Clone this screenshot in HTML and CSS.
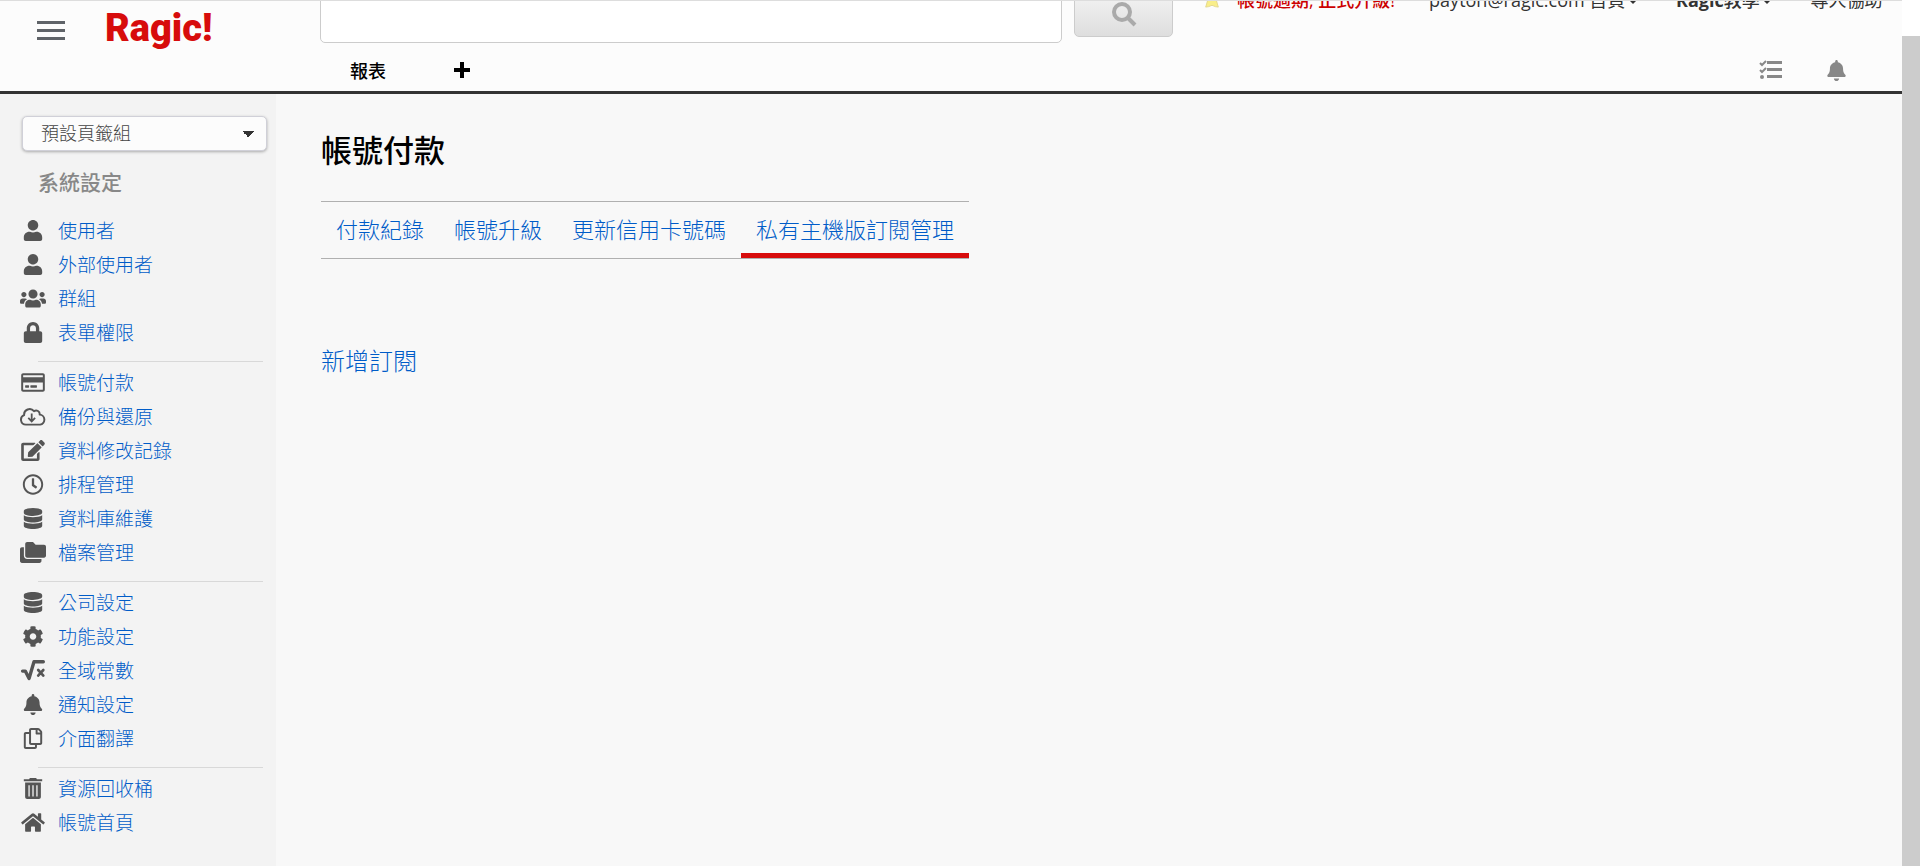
FILE: index.html
```html
<!DOCTYPE html>
<html lang="zh-Hant">
<head>
    <meta charset="UTF-8">
    <meta name="viewport" content="width=device-width, initial-scale=1.0">
    <title>帳號付款</title>
    <link rel="stylesheet" href="styles.css">
</head>
<body>
    <svg class="sprite" aria-hidden="true">
        <symbol id="i-user" viewBox="0 0 448 512"><path d="M224 256c70.700 0 128-57.300 128-128S294.700 0 224 0 96 57.300 96 128s57.300 128 128 128zm89.600 32h-16.700c-22.200 10.200-46.900 16-72.900 16s-50.600-5.800-72.900-16h-16.700C60.200 288 0 348.200 0 422.400V464c0 26.500 21.500 48 48 48h352c26.500 0 48-21.500 48-48v-41.600c0-74.200-60.200-134.400-134.400-134.400z"/></symbol>
        <symbol id="i-users" viewBox="0 0 640 512"><path d="M96 224c35.300 0 64-28.700 64-64s-28.700-64-64-64-64 28.700-64 64 28.700 64 64 64zm448 0c35.300 0 64-28.700 64-64s-28.700-64-64-64-64 28.700-64 64 28.700 64 64 64zm32 32h-64c-17.600 0-33.500 7.100-45.100 18.600 40.300 22.100 68.900 62 75.100 109.400h66c17.700 0 32-14.300 32-32v-32c0-35.300-28.700-64-64-64zm-256 0c61.900 0 112-50.100 112-112S381.900 32 320 32 208 82.100 208 144s50.100 112 112 112zm76.800 32h-8.300c-20.800 10-43.900 16-68.500 16s-47.600-6-68.500-16h-8.300C179.600 288 128 339.600 128 403.200V432c0 26.500 21.500 48 48 48h288c26.500 0 48-21.500 48-48v-28.800c0-63.600-51.600-115.200-115.200-115.200zm-223.700-13.400C161.500 263.100 145.600 256 128 256H64c-35.300 0-64 28.700-64 64v32c0 17.700 14.300 32 32 32h65.900c6.300-47.400 34.900-87.300 75.200-109.400z"/></symbol>
        <symbol id="i-lock" viewBox="0 0 448 512"><path d="M400 224h-24v-72C376 68.200 307.800 0 224 0S72 68.200 72 152v72H48c-26.500 0-48 21.500-48 48v192c0 26.500 21.500 48 48 48h352c26.500 0 48-21.500 48-48V272c0-26.500-21.500-48-48-48zm-104 0H152v-72c0-39.700 32.300-72 72-72s72 32.300 72 72v72z"/></symbol>
        <symbol id="i-card" viewBox="0 0 576 512"><path d="M527.900 32H48.100C21.500 32 0 53.500 0 80v352c0 26.500 21.500 48 48.100 48h479.800c26.600 0 48.100-21.500 48.100-48V80c0-26.500-21.500-48-48.100-48zM54.100 80h467.800c3.300 0 6 2.700 6 6v42H48.100V86c0-3.300 2.700-6 6-6zm467.800 352H54.100c-3.300 0-6-2.700-6-6V256h479.800v170c0 3.300-2.700 6-6 6zM192 332v40c0 6.600-5.400 12-12 12h-72c-6.600 0-12-5.400-12-12v-40c0-6.600 5.400-12 12-12h72c6.600 0 12 5.400 12 12zm192 0v40c0 6.600-5.400 12-12 12H236c-6.600 0-12-5.400-12-12v-40c0-6.600 5.400-12 12-12h136c6.600 0 12 5.400 12 12z"/></symbol>
        <symbol id="i-cloud" viewBox="0 0 640 512"><path d="M144 456a120 120 0 0 1-42-232A136 136 0 0 1 344 126a88 88 0 0 1 140 84A124 124 0 0 1 496 456Z" fill="none" stroke="currentColor" stroke-width="48" stroke-linejoin="round"/><path d="M288 180v190M204 292l84 84 84-84" fill="none" stroke="currentColor" stroke-width="44"/></symbol>
        <symbol id="i-edit" viewBox="0 0 576 512"><path d="M402.600 83.200l90.200 90.200c3.800 3.800 3.800 10 0 13.800L274.400 405.600l-92.800 10.300c-12.400 1.400-22.900-9.100-21.500-21.500l10.300-92.800L388.800 83.200c3.800-3.800 10-3.800 13.800 0zm162-22.900l-48.800-48.800c-15.200-15.200-39.900-15.200-55.200 0l-35.400 35.400c-3.800 3.800-3.800 10 0 13.800l90.200 90.200c3.800 3.800 10 3.800 13.800 0l35.400-35.400c15.200-15.300 15.200-40 0-55.200zM384 346.200V448H64V128h229.800c3.200 0 6.200-1.300 8.500-3.500l40-40c7.600-7.600 2.200-20.500-8.500-20.500H48C21.500 64 0 85.500 0 112v352c0 26.500 21.500 48 48 48h352c26.500 0 48-21.500 48-48V306.200c0-10.700-12.900-16-20.500-8.500l-40 40c-2.200 2.300-3.500 5.300-3.500 8.500z"/></symbol>
        <symbol id="i-clock" viewBox="0 0 512 512"><path d="M256 8C119 8 8 119 8 256s111 248 248 248 248-111 248-248S393 8 256 8zm0 448c-110.500 0-200-89.500-200-200S145.500 56 256 56s200 89.500 200 200-89.500 200-200 200zm61.800-104.400l-84.900-61.700c-3.100-2.300-4.900-5.900-4.900-9.700V116c0-6.600 5.400-12 12-12h32c6.600 0 12 5.400 12 12v141.700l66.800 48.600c5.400 3.900 6.500 11.400 2.600 16.800L334.600 349c-3.900 5.300-11.400 6.500-16.800 2.600z"/></symbol>
        <symbol id="i-db" viewBox="0 0 448 512"><path d="M448 73.100v45.700C448 159.100 347.700 192 224 192S0 159.100 0 118.900V73.100C0 32.900 100.300 0 224 0s224 32.900 224 73.100zM448 176v102.900C448 319.100 347.700 352 224 352S0 319.100 0 278.900V176c48.100 33.100 136.200 48.600 224 48.600S399.900 209.100 448 176zm0 160v102.900C448 479.100 347.700 512 224 512S0 479.100 0 438.900V336c48.100 33.100 136.200 48.600 224 48.600S399.900 369.100 448 336z"/></symbol>
        <symbol id="i-folders" viewBox="0 0 640 512"><path d="M176 0h144l64 64h208c26 0 48 22 48 48v224c0 26-22 48-48 48H176c-26 0-48-22-48-48V48c0-26 22-48 48-48zM48 128h48v208c0 44 36 80 80 80h352v48c0 26-22 48-48 48H48c-26 0-48-22-48-48V176c0-26 22-48 48-48z"/></symbol>
        <symbol id="i-cog" viewBox="0 0 512 512"><path d="M487.400 315.700l-42.600-24.600c4.300-23.200 4.300-47 0-70.200l42.600-24.600c4.900-2.800 7.100-8.600 5.500-14-11.100-35.600-30-67.800-54.700-94.600-3.800-4.100-10-5.100-14.800-2.300L380.800 110c-17.900-15.400-38.500-27.300-60.800-35.100V25.800c0-5.600-3.900-10.500-9.400-11.700-36.700-8.200-74.300-7.800-109.200 0-5.500 1.200-9.400 6.100-9.400 11.700V75c-22.200 7.900-42.800 19.800-60.800 35.100L88.700 85.500c-4.900-2.800-11-1.900-14.800 2.300-24.700 26.700-43.600 58.900-54.700 94.600-1.700 5.400.600 11.200 5.500 14L67.300 221c-4.300 23.200-4.300 47 0 70.200l-42.600 24.600c-4.900 2.800-7.100 8.600-5.500 14 11.100 35.600 30 67.800 54.700 94.600 3.800 4.100 10 5.100 14.800 2.300l42.600-24.600c17.900 15.400 38.500 27.300 60.800 35.100v49.200c0 5.600 3.900 10.500 9.400 11.700 36.700 8.200 74.300 7.800 109.200 0 5.500-1.200 9.400-6.100 9.400-11.700v-49.200c22.200-7.900 42.800-19.800 60.800-35.100l42.600 24.600c4.900 2.800 11 1.900 14.800-2.300 24.700-26.700 43.600-58.900 54.700-94.600 1.500-5.500-.700-11.300-5.600-14.100zM256 336c-44.100 0-80-35.900-80-80s35.900-80 80-80 80 35.900 80 80-35.900 80-80 80z"/></symbol>
        <symbol id="i-root" viewBox="0 0 576 512"><path d="M34 270h66l92 180L312 42h228" fill="none" stroke="currentColor" stroke-width="82" stroke-linejoin="round" stroke-linecap="round"/><path d="M414 244l126 136M540 244L414 380" stroke="currentColor" stroke-width="64" stroke-linecap="round"/></symbol>
        <symbol id="i-bell" viewBox="0 0 448 512"><path d="M224 512c35.300 0 63.900-28.700 63.900-64H160.100c0 35.300 28.600 64 63.900 64zm215.400-149.700c-19.300-20.800-55.500-52-55.500-154.300 0-77.700-54.500-139.900-127.900-155.200V32c0-17.700-14.300-32-32-32s-32 14.300-32 32v20.800C118.600 68.100 64.100 130.300 64.100 208c0 102.300-36.200 133.500-55.500 154.300C2.600 368.700 0 376.500 0 384c.100 16.400 13 32 32.100 32h383.800c19.100 0 32-15.600 32.100-32 0-7.500-2.600-15.300-8.600-21.700z"/></symbol>
        <symbol id="i-copy" viewBox="0 0 448 512"><path d="M433.900 65.900l-51.800-51.800A48 48 0 0 0 348.100 0H176c-26.500 0-48 21.500-48 48v48H48c-26.500 0-48 21.500-48 48v320c0 26.500 21.500 48 48 48h224c26.500 0 48-21.500 48-48v-48h80c26.500 0 48-21.500 48-48V99.900a48 48 0 0 0-14.100-34zM266 464H54a6 6 0 0 1-6-6V150a6 6 0 0 1 6-6h74v224c0 26.500 21.500 48 48 48h96v42a6 6 0 0 1-6 6zm128-96H182a6 6 0 0 1-6-6V54a6 6 0 0 1 6-6h106v88c0 13.300 10.700 24 24 24h88v202a6 6 0 0 1-6 6zm6-256h-64V48h9.600c1.600 0 3.100.600 4.200 1.800l48.400 48.400a6 6 0 0 1 1.800 4.200V112z"/></symbol>
        <symbol id="i-trash" viewBox="0 0 448 512"><path d="M0 32h128l20-32h152l20 32h128v48H0zM32 112h384v352c0 26-22 48-48 48H80c-26 0-48-22-48-48zM112 176v272h32V176zm96 0v272h32V176zm96 0v272h32V176z" fill-rule="evenodd"/></symbol>
        <symbol id="i-home" viewBox="0 0 576 512"><path d="M280.400 148.300L96 300.100V464a16 16 0 0 0 16 16l112-.3a16 16 0 0 0 16-16V368a16 16 0 0 1 16-16h64a16 16 0 0 1 16 16v95.600a16 16 0 0 0 16 16.100L464 480a16 16 0 0 0 16-16V300L295.700 148.300a12.200 12.200 0 0 0-15.300 0zM571.600 251.500L488 182.600V44a12 12 0 0 0-12-12h-56a12 12 0 0 0-12 12v72.600L318.500 43a48 48 0 0 0-61 0L4.300 251.500a12 12 0 0 0-1.600 16.900l25.500 31a12 12 0 0 0 16.900 1.600L280.400 107.200a12.200 12.200 0 0 1 15.300 0L530.900 301a12 12 0 0 0 16.900-1.600l25.500-31a12 12 0 0 0-1.700-16.900z"/></symbol>
    </svg>

    <div class="page">
        <header class="header">
            <div class="brand">
                <button class="menu-btn" aria-label="選單">
                    <span></span><span></span><span></span>
                </button>
                <a class="logo" href="#">Ragic!</a>
            </div>
            <div class="header-main">
                <div class="top-row">
                    <input class="search" type="text" aria-label="搜尋">
                    <button class="search-btn" aria-label="搜尋">
                        <svg viewBox="0 0 26 26"><circle cx="11" cy="11" r="8" fill="none" stroke="currentColor" stroke-width="4"/><path d="M17 17l7 7" stroke="currentColor" stroke-width="4"/></svg>
                    </button>
                    <nav class="top-links">
                        <svg class="star" viewBox="0 0 20 20"><path d="M10 1l3 6 6 1-4 4 2 7q-3 0-7-2-4 2-7 2l2-7-4-4 6-1z"/></svg>
                        <a class="expired" href="#">帳號過期, 正式升級!</a>
                        <a class="account" href="#">payton@ragic.com 首頁 <i class="caret"></i></a>
                        <a class="learn" href="#"><b>Ragic</b>教學 <i class="caret"></i></a>
                        <a class="help" href="#">專人協助</a>
                    </nav>
                </div>
                <div class="tab-row">
                    <a class="report" href="#">報表</a>
                    <button class="add" aria-label="新增"></button>
                    <div class="tools">
                        <button aria-label="待辦"><svg class="tasks" viewBox="0 0 24 20"><path d="M1 3l2 2 4-4M1 10l2 2 4-4" fill="none" stroke="currentColor" stroke-width="2"/><circle cx="3" cy="17" r="2"/><path d="M8 1h15v3H8zM8 8h15v3H8zM8 15h15v3H8z"/></svg></button>
                        <button aria-label="通知"><svg class="bell"><use href="#i-bell"/></svg></button>
                    </div>
                </div>
            </div>
        </header>

        <div class="body">
            <aside class="sidebar">
                <select class="tab-group" aria-label="頁籤組">
                    <option>預設頁籤組</option>
                </select>
                <h2>系統設定</h2>
                <ul>
                    <li><a href="#"><svg><use href="#i-user"/></svg>使用者</a></li>
                    <li><a href="#"><svg><use href="#i-user"/></svg>外部使用者</a></li>
                    <li><a href="#"><svg><use href="#i-users"/></svg>群組</a></li>
                    <li><a href="#"><svg><use href="#i-lock"/></svg>表單權限</a></li>
                </ul>
                <hr>
                <ul>
                    <li><a href="#"><svg><use href="#i-card"/></svg>帳號付款</a></li>
                    <li><a href="#"><svg><use href="#i-cloud"/></svg>備份與還原</a></li>
                    <li><a href="#"><svg><use href="#i-edit"/></svg>資料修改記錄</a></li>
                    <li><a href="#"><svg><use href="#i-clock"/></svg>排程管理</a></li>
                    <li><a href="#"><svg><use href="#i-db"/></svg>資料庫維護</a></li>
                    <li><a href="#"><svg><use href="#i-folders"/></svg>檔案管理</a></li>
                </ul>
                <hr>
                <ul>
                    <li><a href="#"><svg><use href="#i-db"/></svg>公司設定</a></li>
                    <li><a href="#"><svg><use href="#i-cog"/></svg>功能設定</a></li>
                    <li><a href="#"><svg><use href="#i-root"/></svg>全域常數</a></li>
                    <li><a href="#"><svg><use href="#i-bell"/></svg>通知設定</a></li>
                    <li><a href="#"><svg><use href="#i-copy"/></svg>介面翻譯</a></li>
                </ul>
                <hr>
                <ul>
                    <li><a href="#"><svg><use href="#i-trash"/></svg>資源回收桶</a></li>
                    <li><a href="#"><svg><use href="#i-home"/></svg>帳號首頁</a></li>
                </ul>
            </aside>

            <main class="content">
                <h1>帳號付款</h1>
                <nav class="tabs">
                    <a href="#">付款紀錄</a>
                    <a href="#">帳號升級</a>
                    <a href="#">更新信用卡號碼</a>
                    <a class="active" href="#">私有主機版訂閱管理</a>
                </nav>
                <a class="new-sub" href="#">新增訂閱</a>
            </main>
        </div>
    </div>
    <div class="scroll-track"><div class="scroll-thumb"></div></div>
</body>
</html>
```
FILE: styles.css
```css
* {
    box-sizing: border-box;
}
body {
    margin: 0;
    display: flex;
    min-height: 100vh;
    font-family: "Open Sans", "Noto Sans CJK TC", sans-serif;
    font-weight: 300;
    background: #f8f8f8;
    color: #333;
}
a {
    color: #005cc8;
    text-decoration: none;
}
button {
    padding: 0;
    border: none;
    background: none;
    cursor: pointer;
}
svg {
    fill: currentColor;
}
ul {
    list-style: none;
    margin: 0;
    padding: 0;
}
.sprite {
    display: none;
}
.page {
    flex: 1;
    min-width: 0;
    display: flex;
    flex-direction: column;
}

/* header */
.header {
    display: flex;
    height: 94px;
    overflow: hidden;
    background: #fcfcfc;
    border-top: 1px solid #ddd;
    border-bottom: 3px solid #333;
}
.brand {
    width: 320px;
    flex: none;
    display: flex;
    align-items: flex-start;
    gap: 40px;
    padding-left: 37px;
}
.menu-btn {
    display: flex;
    flex-direction: column;
    gap: 5px;
    margin-top: 20px;
}
.menu-btn span {
    width: 28px;
    height: 3px;
    background: #5f6368;
}
.logo {
    font-family: "Roboto", sans-serif;
    font-weight: 900;
    font-size: 38px;
    line-height: 54px;
    color: #d70c0c;
}
.header-main {
    flex: 1;
    display: flex;
    flex-direction: column;
}
.top-row {
    display: flex;
    flex: none;
    align-items: flex-start;
    height: 46px;
}
.search {
    width: 742px;
    height: 52px;
    margin-top: -10px;
    border: 1px solid #ccc;
    border-radius: 5px;
    background: #fff;
}
.search-btn {
    width: 99px;
    height: 46px;
    margin: -10px 0 0 12px;
    border: 1px solid #ccc;
    border-radius: 5px;
    background: linear-gradient(#f4f4f4, #dedede);
    color: #aaa;
}
.search-btn svg {
    width: 26px;
    height: 26px;
    margin-top: 2px;
}
.top-links {
    flex: 1;
    display: flex;
    align-items: center;
    height: 26px;
    margin-top: -15px;
    font-size: 18px;
    font-weight: 400;
    white-space: nowrap;
}
.top-links a {
    color: #333;
}
.star {
    width: 18px;
    height: 20px;
    margin: 0 16px 0 30px;
    color: #f9ee8a;
    stroke: #e2d68a;
}
.top-links .expired {
    color: #c00;
    font-weight: 500;
    margin-right: 34px;
}
.top-links .learn {
    font-weight: 500;
    margin: 0 40px;
}
.caret {
    display: inline-block;
    vertical-align: middle;
    border: 3px solid transparent;
    border-top-color: #333;
    border-bottom: none;
}
.tab-row {
    display: flex;
    flex: none;
    align-items: center;
    height: 46px;
    padding: 0 56px 0 30px;
}
.report {
    font-size: 18px;
    font-weight: 500;
    color: #000;
}
.add {
    width: 16px;
    height: 16px;
    margin-left: 68px;
    background: linear-gradient(#000, #000) center / 100% 4px no-repeat, linear-gradient(#000, #000) center / 4px 100% no-repeat;
}
.tools {
    display: flex;
    align-items: center;
    gap: 44px;
    margin-left: auto;
}
.tools button {
    display: flex;
    color: #888;
}
.tasks {
    width: 24px;
    height: 20px;
}
.bell {
    width: 19px;
    height: 21px;
}

/* sidebar */
.body {
    flex: 1;
    display: flex;
}
.sidebar {
    width: 276px;
    flex: none;
    padding: 22px 9px 0 20px;
    background: #f3f3f3;
}
.tab-group {
    appearance: none;
    display: block;
    width: 245px;
    height: 35px;
    margin-left: 2px;
    padding: 0 18px 2px;
    border: 1px solid #d0d0d8;
    border-radius: 5px;
    box-shadow: 0 1px 3px rgba(0, 0, 0, 0.3);
    background-color: #fcfcfc;
    background-image: linear-gradient(to bottom left, #333 50%, transparent 50%), linear-gradient(to bottom right, #333 50%, transparent 50%);
    background-size: 6px 6px;
    background-position: right 18px center, right 12px center;
    background-repeat: no-repeat;
    font-family: inherit;
    font-size: 18px;
    font-weight: 300;
    color: #444;
}
.sidebar h2 {
    margin: 16px 0 16px 18px;
    font-size: 21px;
    line-height: 30px;
    font-weight: 500;
    color: #888;
}
.sidebar li a {
    display: flex;
    align-items: center;
    gap: 12px;
    height: 34px;
    font-size: 19px;
}
.sidebar li svg {
    flex: none;
    width: 26px;
    height: 21px;
    color: #555;
}
.sidebar hr {
    height: 1px;
    margin: 12px 4px 3px 18px;
    border: none;
    background: #d8d8d8;
}

/* content */
.content {
    flex: 1;
    padding: 33px 45px;
}
.content h1 {
    margin: 0;
    font-size: 31px;
    line-height: 46px;
    font-weight: 500;
    color: #000;
}
.tabs {
    display: flex;
    width: fit-content;
    height: 58px;
    margin: 28px 0 77px;
    border-top: 1px solid #b0b0b0;
    border-bottom: 1px solid #b0b0b0;
    font-size: 22px;
}
.tabs a {
    padding: 0 15px;
    line-height: 54px;
}
.tabs .active {
    box-shadow: inset 0 -5px #d70c0c;
}
.new-sub {
    display: block;
    width: fit-content;
    font-size: 24px;
    line-height: 50px;
}

/* scrollbar */
.scroll-track {
    width: 18px;
    padding-top: 36px;
    background: #fff;
    display: flex;
}
.scroll-thumb {
    flex: 1;
    background: #ccc;
}
```
